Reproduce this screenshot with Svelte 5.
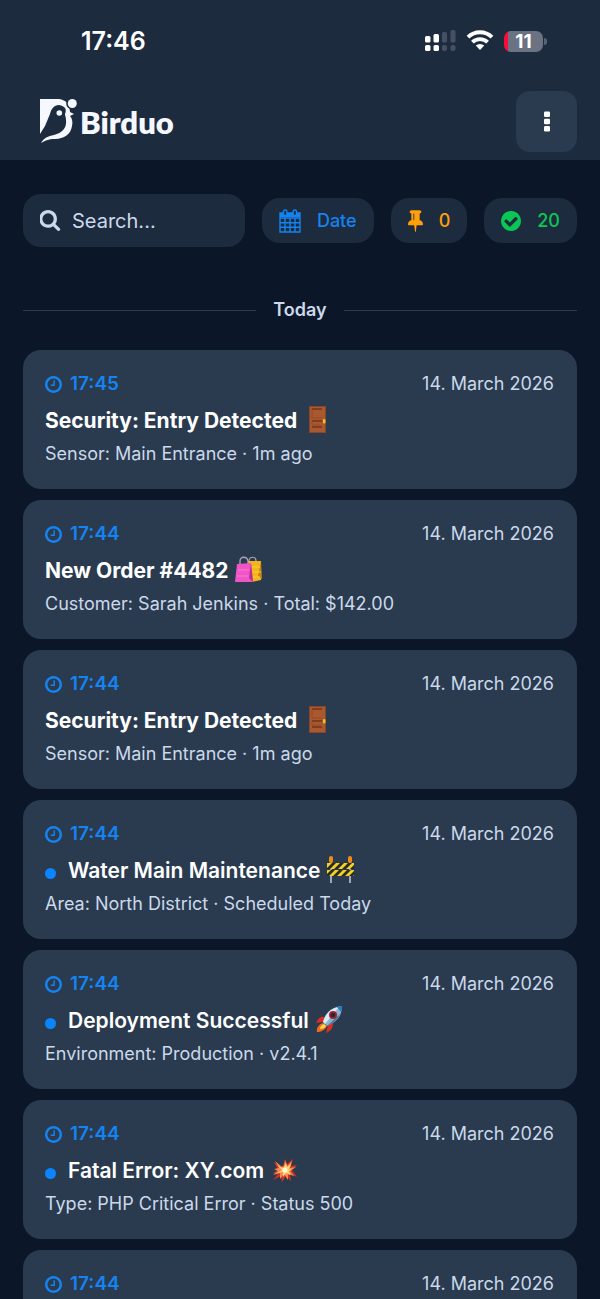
<script lang="ts">
  type Emoji = 'door' | 'bags' | 'barrier' | 'rocket' | 'boom';

  interface Message {
    id: number;
    time: string;
    date: string;
    title: string;
    emoji: Emoji;
    body: string;
    unread?: boolean;
  }

  const date = '14. March 2026';

  const messages: Message[] = [
    { id: 1, time: '17:45', date, title: 'Security: Entry Detected', emoji: 'door', body: 'Sensor: Main Entrance · 1m ago' },
    { id: 2, time: '17:44', date, title: 'New Order #4482', emoji: 'bags', body: 'Customer: Sarah Jenkins · Total: $142.00' },
    { id: 3, time: '17:44', date, title: 'Security: Entry Detected', emoji: 'door', body: 'Sensor: Main Entrance · 1m ago' },
    { id: 4, time: '17:44', date, title: 'Water Main Maintenance', emoji: 'barrier', body: 'Area: North District · Scheduled Today', unread: true },
    { id: 5, time: '17:44', date, title: 'Deployment Successful', emoji: 'rocket', body: 'Environment: Production · v2.4.1', unread: true },
    { id: 6, time: '17:44', date, title: 'Fatal Error: XY.com', emoji: 'boom', body: 'Type: PHP Critical Error · Status 500', unread: true },
    { id: 7, time: '17:44', date, title: '', emoji: 'door', body: '' },
  ];

  let query = $state('');

  const visible = $derived(
    messages.filter((m) => `${m.title} ${m.body}`.toLowerCase().includes(query.toLowerCase()))
  );
</script>

{#snippet emojiIcon(kind: Emoji)}
  <svg class="emoji" viewBox="0 0 27 27" aria-hidden="true">
    {#if kind === 'door'}
      <rect x="5" y="0" width="17" height="27" fill="#8a4526" />
      <rect x="6" y="1" width="15" height="25" fill="#a9582f" />
      <path d="M8 3h10M8 15h10M8 21h10" stroke="#74341b" stroke-width="1.3" />
      <path d="M8 3v9h10M8 15v4h10" fill="none" stroke="#954a28" />
      <rect x="19" y="13" width="2.5" height="4.5" rx="1" fill="#f4bd22" />
    {:else if kind === 'bags'}
      <path d="M14 9V5c0-5 7-5 7 0v4" fill="none" stroke="#a4a5b3" stroke-width="1.2" />
      <path d="M13 5h13v19l-9 2z" fill="#f3b51b" />
      <path d="m26 5 1 18-4-3z" fill="#c98313" />
      <path d="M17 11h8m-7 5h8m-8 5h7" stroke="#ffcf34" />
      <path d="M5 11V5c0-5 7-5 8 0v4" fill="none" stroke="#b1a4ba" stroke-width="1.3" />
      <path d="m2 8 14-1 2 19H0z" fill="#ef55c4" />
      <path d="m16 7 2 19-4-4z" fill="#b82e93" />
      <path d="M3 14h11M2 20h12" stroke="#ff78d7" />
    {:else if kind === 'barrier'}
      <path d="M4 6v21M23 6v21" stroke="#9ba8b7" stroke-width="2" />
      <rect x="2" y="0" width="4" height="7" rx="2" fill="#f28a16" />
      <rect x="21" y="0" width="4" height="7" rx="2" fill="#f28a16" />
      <path d="M0 7h27v6H0zM0 14h27v6H0z" fill="#f4cf29" />
      <path d="m0 12 5-5h4l-6 6H0zm7 1 6-6h4l-6 6zm8 0 6-6h4l-6 6zm8 0 4-4v4zM0 18l4-4h4l-6 6H0zm6 2 6-6h4l-6 6zm8 0 6-6h4l-6 6zm8 0 5-5v4l-1 1z" fill="#292b25" />
    {:else if kind === 'rocket'}
      <path d="M9 11C4 10 2 13 0 17l7-1zM12 19l5-2c0 5-2 8-7 10z" fill="#d82e20" />
      <path d="M7 17c-4 1-7 5-6 9 4 0 8-2 10-6z" fill="#f26a1a" />
      <path d="M8 18c-3 1-4 3-4 5 3 0 5-1 6-3z" fill="#ffd94a" />
      <path d="M7 16C9 7 15 1 26 0c0 10-5 16-15 20z" fill="#8eb2cf" />
      <path d="M7 16C10 7 15 2 23 1L9 18z" fill="#d9edf7" />
      <path d="M21 1c2-1 4-1 5-1 0 2 0 4-1 6z" fill="#287cc0" />
      <path d="m11 20 13-12c-2 5-6 9-13 12z" fill="#4775a0" />
      <circle cx="17" cy="9" r="4" fill="#a52129" />
      <circle cx="17" cy="9" r="2.3" fill="#24293d" />
    {:else}
      <path d="m13 8 1-5 2 5 6-5-2 7 6-1-5 5 5 7-7-3 1 7-5-5-4 6-1-6-8 4 5-6-5-1 5-3-4-8 7 5z" fill="#cf321e" />
      <path d="m13 10 1-6 2 6 5-5-2 7 6-1-6 4 4 5-6-2v6l-4-6-4 5v-6l-7 2 5-4-4-2 5-1-4-7 7 6z" fill="#fa8b56" />
      <path d="m13 11 2-4 1 4 4-3-2 5 3 1-3 1 1 4-4-2-3 4v-5l-5 1 4-3-4-4 5 2z" fill="#ffd675" />
      <circle cx="14" cy="14" r="2.5" fill="#fff9d8" />
    {/if}
  </svg>
{/snippet}

<div class="app">
  <header>
    <div class="status">
      <span class="clock">17:46</span>
      <div class="indicators">
        <svg width="31" height="22" viewBox="0 0 31 22" aria-hidden="true">
          <g fill="#fff">
            <rect x="0" y="6" width="5.5" height="6.5" rx="1.6" />
            <rect x="8.5" y="4" width="5.5" height="8.5" rx="1.6" />
            <rect x="0" y="15" width="5.5" height="6" rx="1.6" />
            <rect x="8.5" y="15" width="5.5" height="6" rx="1.6" />
          </g>
          <g fill="#465064">
            <rect x="17" y="2" width="5" height="10.5" rx="1.6" />
            <rect x="25.5" y="0" width="5" height="12.5" rx="1.6" />
            <rect x="17" y="15" width="5" height="6" rx="2" />
            <rect x="25.5" y="15" width="5" height="6" rx="2" />
          </g>
        </svg>
        <svg width="28" height="22" viewBox="0 0 28 22" aria-hidden="true">
          <path d="M2 7.2a17 17 0 0 1 24 0M6.4 12.2a10.8 10.8 0 0 1 15.2 0" fill="none" stroke="#fff" stroke-width="3.8" />
          <path d="M9.8 15.6a6.2 6.2 0 0 1 8.4 0L14 20z" fill="#fff" />
        </svg>
        <div class="battery"><span>11</span></div>
      </div>
    </div>
    <div class="bar">
      <a class="brand" href="#home" aria-label="Birduo">
        <svg width="37" height="45" viewBox="0 0 37 45" aria-hidden="true">
          <path
            d="M0 0h17c5 0 9 2 11 5 1 3 2 6 2 8l4 2-4 2c2 2 3 6 2 10-1 8-8 13-17 13-7 0-10 2-14 4 3-5 7-7 13-8 8-2 13-7 12-15 0-3-1-4-1-6 2-5 0-8-6-9-5 0-8 4-9 9L5 27 0 35z"
            fill="#f5f9ff"
          />
          <circle cx="32" cy="4.5" r="5.8" fill="#1d2b3f" />
          <circle cx="32.3" cy="4.5" r="4.5" fill="#f5f9ff" />
          <circle cx="19.3" cy="14" r="2.8" fill="#f5f9ff" />
        </svg>
        <span>Birduo</span>
      </a>
      <button class="menu" type="button" aria-label="Menu">
        <svg width="6" height="22" viewBox="0 0 6 22" fill="#fff" aria-hidden="true">
          <rect y="0.5" width="6" height="5.5" rx="1.3" />
          <rect y="7.8" width="6" height="5.5" rx="1.3" />
          <rect y="15.1" width="6" height="5.5" rx="1.3" />
        </svg>
      </button>
    </div>
  </header>

  <main>
    <div class="filters">
      <label class="search">
        <svg width="21" height="21" viewBox="64 128 1664 1664" fill="currentColor" aria-hidden="true">
          <path d="M1152 832q0-185-131.5-316.5t-316.5-131.5-316.5 131.5-131.5 316.5 131.5 316.5 316.5 131.5 316.5-131.5 131.5-316.5zm512 832q0 52-38 90t-90 38q-54 0-90-38l-343-342q-179 124-399 124-143 0-273.5-55.5t-225-150-150-225-55.5-273.5 55.5-273.5 150-225 225-150 273.5-55.5 273.5 55.5 225 150 150 225 55.5 273.5q0 220-124 399l343 343q37 37 37 90z" />
        </svg>
        <input type="search" placeholder="Search..." aria-label="Search" bind:value={query} />
      </label>
      <button class="chip date" type="button">
        <svg width="22" height="24" viewBox="0 0 22 24" aria-hidden="true">
          <path d="M1 4h20v19H1zM1 9h20M1 13.7h20M1 18.3h20M6 9v14M11 9v14M16 9v14" fill="none" stroke="currentColor" stroke-width="1.4" />
          <path d="M1 4h20v4H1z" fill="currentColor" />
          <rect x="4.5" y="1" width="3.4" height="5.5" rx="1.6" fill="#1d2b3f" stroke="currentColor" stroke-width="1.4" />
          <rect x="14.1" y="1" width="3.4" height="5.5" rx="1.6" fill="#1d2b3f" stroke="currentColor" stroke-width="1.4" />
        </svg>
        Date
      </button>
      <button class="chip pinned" type="button" aria-label="Pinned: 0">
        <svg width="15" height="22" viewBox="320 128 1152 1664" fill="currentColor" aria-hidden="true">
          <path d="M800 864v-448q0-14-9-23t-23-9-23 9-9 23v448q0 14 9 23t23 9 23-9 9-23zm672 352q0 26-19 45t-45 19h-429l-51 483q-2 12-10.5 20.5t-20.5 8.5h-1q-27 0-32-27l-76-485h-404q-26 0-45-19t-19-45q0-123 78.5-221.5t177.5-98.5v-512q-52 0-90-38t-38-90 38-90 90-38h640q52 0 90 38t38 90-38 90-90 38v512q99 0 177.5 98.5t78.5 221.5z" />
        </svg>
        0
      </button>
      <button class="chip done" type="button" aria-label="Done: 20">
        <svg width="20" height="20" viewBox="128 128 1536 1536" fill="currentColor" aria-hidden="true">
          <path d="M1412 734q0-28-18-46l-91-90q-19-19-45-19t-45 19l-408 407-226-226q-19-19-45-19t-45 19l-91 90q-18 18-18 46 0 27 18 45l362 362q19 19 45 19 27 0 46-19l543-543q18-18 18-45zm252 162q0 209-103 385.5t-279.5 279.5-385.5 103-385.5-103-279.5-279.5-103-385.5 103-385.5 279.5-279.5 385.5-103 385.5 103 279.5 279.5 103 385.5z" />
        </svg>
        20
      </button>
    </div>

    <h2 class="day">Today</h2>

    <div class="list">
      {#each visible as m (m.id)}
        <article class="card">
          <div class="meta">
            <span class="time">
              <svg width="17" height="17" viewBox="128 128 1536 1536" fill="currentColor" aria-hidden="true">
                <path d="M1024 544v448q0 14-9 23t-23 9h-320q-14 0-23-9t-9-23v-64q0-14 9-23t23-9h224v-352q0-14 9-23t23-9h64q14 0 23 9t9 23zm416 352q0-148-73-273t-198-198-273-73-273 73-198 198-73 273 73 273 198 198 273 73 273-73 198-198 73-273zm224 0q0 209-103 385.5t-279.5 279.5-385.5 103-385.5-103-279.5-279.5-103-385.5 103-385.5 279.5-279.5 385.5-103 385.5 103 279.5 279.5 103 385.5z" />
              </svg>
              {m.time}
            </span>
            <span>{m.date}</span>
          </div>
          <h3 class:unread={m.unread}>
            {#if m.unread}<span class="dot"></span>{/if}
            <span>{m.title}</span>
            {@render emojiIcon(m.emoji)}
          </h3>
          <p>{m.body}</p>
        </article>
      {/each}
    </div>
  </main>
</div>

<style>
  :global(body) {
    margin: 0;
    background: #0b1628;
  }
  .app {
    display: flex;
    flex-direction: column;
    height: 100vh;
    overflow: hidden;
    color: #cbd9ea;
    font-family: Inter, 'Liberation Sans', sans-serif;
  }
  svg {
    display: block;
    flex: none;
  }
  button {
    border: 0;
    font: inherit;
    cursor: pointer;
  }

  header {
    flex: none;
    background: #1d2b3f;
  }
  .status {
    display: flex;
    align-items: center;
    justify-content: space-between;
    padding: 25px 54px 0 81px;
    line-height: 32px;
  }
  .clock {
    color: #fff;
    font-size: 25px;
    font-weight: 600;
  }
  .indicators {
    display: flex;
    align-items: center;
    gap: 10px;
  }
  .battery {
    position: relative;
    width: 39px;
    height: 21px;
    margin: 0 3px 0 0;
    border-radius: 7px;
    background: linear-gradient(90deg, #ff0b37 4px, #6b7383 4px);
    color: #fff;
    font-size: 19px;
    font-weight: 700;
    line-height: 21px;
    text-align: center;
  }
  .battery::after {
    content: '';
    position: absolute;
    top: 7px;
    right: -4px;
    width: 3px;
    height: 7px;
    border-radius: 0 3px 3px 0;
    background: #596374;
  }
  .bar {
    display: flex;
    align-items: center;
    justify-content: space-between;
    padding: 34px 23px 8px 40px;
  }
  .brand {
    display: flex;
    align-items: center;
    gap: 3px;
    color: #f5f9ff;
    font-family: Lato, sans-serif;
    font-size: 31px;
    font-weight: 800;
    line-height: 36px;
    text-decoration: none;
  }
  .menu {
    display: grid;
    place-items: center;
    width: 61px;
    height: 61px;
    border-radius: 14px;
    background: #2a3b50;
  }

  main {
    flex: 1;
    min-height: 0;
    padding: 34px 23px 0;
    overflow: hidden;
  }
  .filters {
    display: flex;
    align-items: center;
    gap: 17px;
  }
  .search {
    display: flex;
    flex: 1;
    align-items: center;
    gap: 11px;
    min-width: 0;
    height: 53px;
    padding: 0 17px;
    box-sizing: border-box;
    border-radius: 18px;
    background: #1d2b3f;
  }
  .search input {
    flex: 1;
    width: 0;
    min-width: 0;
    padding: 0;
    border: 0;
    outline: 0;
    background: none;
    color: #cbd9ea;
    font: inherit;
    font-size: 20px;
  }
  .search input::placeholder {
    color: #cbd9ea;
    opacity: 1;
  }
  .chip {
    display: flex;
    align-items: center;
    gap: 16px;
    height: 45px;
    padding: 0 17px;
    border-radius: 18px;
    background: #1d2b3f;
    font-size: 18px;
    font-weight: 500;
  }
  .date {
    color: #1583f0;
  }
  .pinned {
    color: #ff9f0a;
  }
  .done {
    color: #0ac655;
  }

  .day {
    display: flex;
    align-items: center;
    gap: 17px;
    margin: 51px 0 28px;
    font-size: 18px;
    font-weight: 600;
    line-height: 24px;
  }
  .day::before,
  .day::after {
    content: '';
    flex: 1;
    height: 1px;
    background: #2c3a4e;
  }

  .list {
    display: flex;
    flex-direction: column;
    gap: 11px;
  }
  .card {
    padding: 22px 23px 23px 22px;
    border-radius: 18px;
    background: #2a3b50;
    font-size: 18px;
    line-height: 24px;
  }
  .meta {
    display: flex;
    justify-content: space-between;
  }
  .time {
    display: flex;
    align-items: center;
    gap: 8px;
    color: #1583f0;
    font-size: 19px;
    font-weight: 600;
  }
  h3 {
    display: flex;
    align-items: center;
    margin: 10px 0 6px;
    color: #fff;
    font-size: 21px;
    font-weight: 700;
    line-height: 30px;
  }
  .unread {
    font-weight: 600;
  }
  .dot {
    width: 11px;
    height: 11px;
    margin: 5px 12px 0 0;
    border-radius: 50%;
    background: #0a84ff;
  }
  .emoji {
    width: 27px;
    height: 27px;
    margin: 0 0 3px 7px;
  }
  .card p {
    margin: 0;
  }
</style>
